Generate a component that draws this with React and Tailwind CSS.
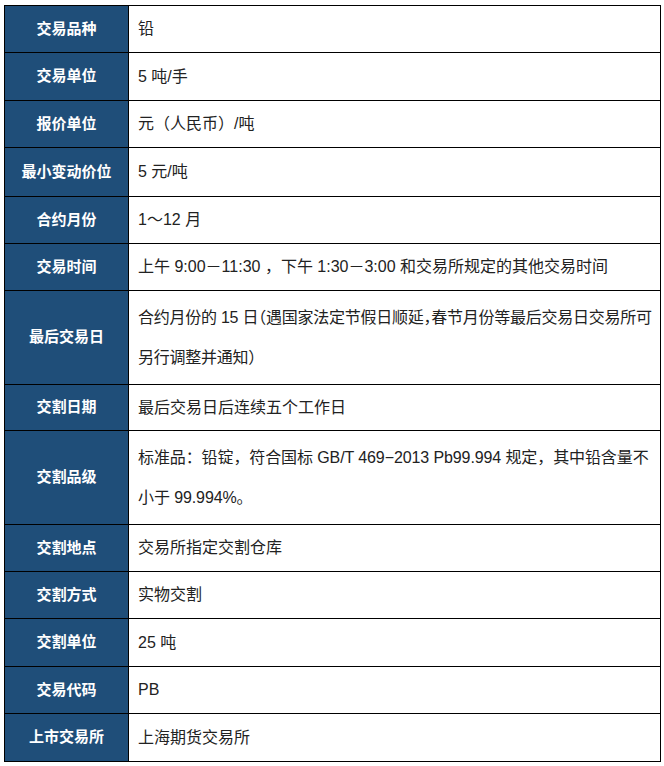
import React from 'react';

const rows = [
  { label: '交易品种', value: '铅', h: 'h-[47px]' },
  { label: '交易单位', value: '5 吨/手', h: 'h-[48px]' },
  { label: '报价单位', value: '元（人民币）/吨', h: 'h-[47px]' },
  { label: '最小变动价位', value: '5 元/吨', h: 'h-[49px]' },
  { label: '合约月份', value: '1～12 月', h: 'h-[47px]' },
  { label: '交易时间', value: '上午 9:00－11:30 ，下午 1:30－3:00 和交易所规定的其他交易时间', h: 'h-[47px]' },
  {
    label: '最后交易日',
    value: ['合约月份的 15 日（遇国家法定节假日顺延，春节月份等最后交易日交易所可', '另行调整并通知）'],
    h: 'h-[94px]',
    tight: true,
  },
  { label: '交割日期', value: '最后交易日后连续五个工作日', h: 'h-[46px]' },
  {
    label: '交割品级',
    value: ['标准品：铅锭，符合国标 GB/T 469−2013 Pb99.994 规定，其中铅含量不', '小于 99.994%。'],
    h: 'h-[94px]',
  },
  { label: '交割地点', value: '交易所指定交割仓库', h: 'h-[47px]' },
  { label: '交割方式', value: '实物交割', h: 'h-[47px]' },
  { label: '交割单位', value: '25 吨', h: 'h-[48px]' },
  { label: '交易代码', value: 'PB', h: 'h-[47px]' },
  { label: '上市交易所', value: '上海期货交易所', h: 'h-[48px]' },
];

export default function App() {
  return (
    <div
      className="min-h-screen bg-white pt-[5px] pl-[4px]"
      style={{ fontFamily: '"Liberation Sans", "Noto Sans CJK SC", sans-serif' }}
    >
      <table className="w-[657px] table-fixed border-collapse border border-black">
        <colgroup>
          <col className="w-[124px]" />
          <col />
        </colgroup>
        <tbody>
          {rows.map((row) => (
            <tr key={row.label} className={row.h}>
              <td className="border border-black bg-[#1f4e79] text-center text-[15px] font-bold text-white">
                {row.label}
              </td>
              <td className="overflow-hidden border border-black pl-[9px] pr-1 text-[16px] text-[#222]">
                {Array.isArray(row.value) ? (
                  <div
                    className={
                      row.tight
                        ? "leading-[40px] tracking-[-0.25px] [font-feature-settings:'halt']"
                        : 'leading-[40px] tracking-[-0.1px]'
                    }
                  >
                    {row.value.map((line) => (
                      <div key={line} className="whitespace-nowrap">{line}</div>
                    ))}
                  </div>
                ) : (
                  row.value
                )}
              </td>
            </tr>
          ))}
        </tbody>
      </table>
    </div>
  );
}
